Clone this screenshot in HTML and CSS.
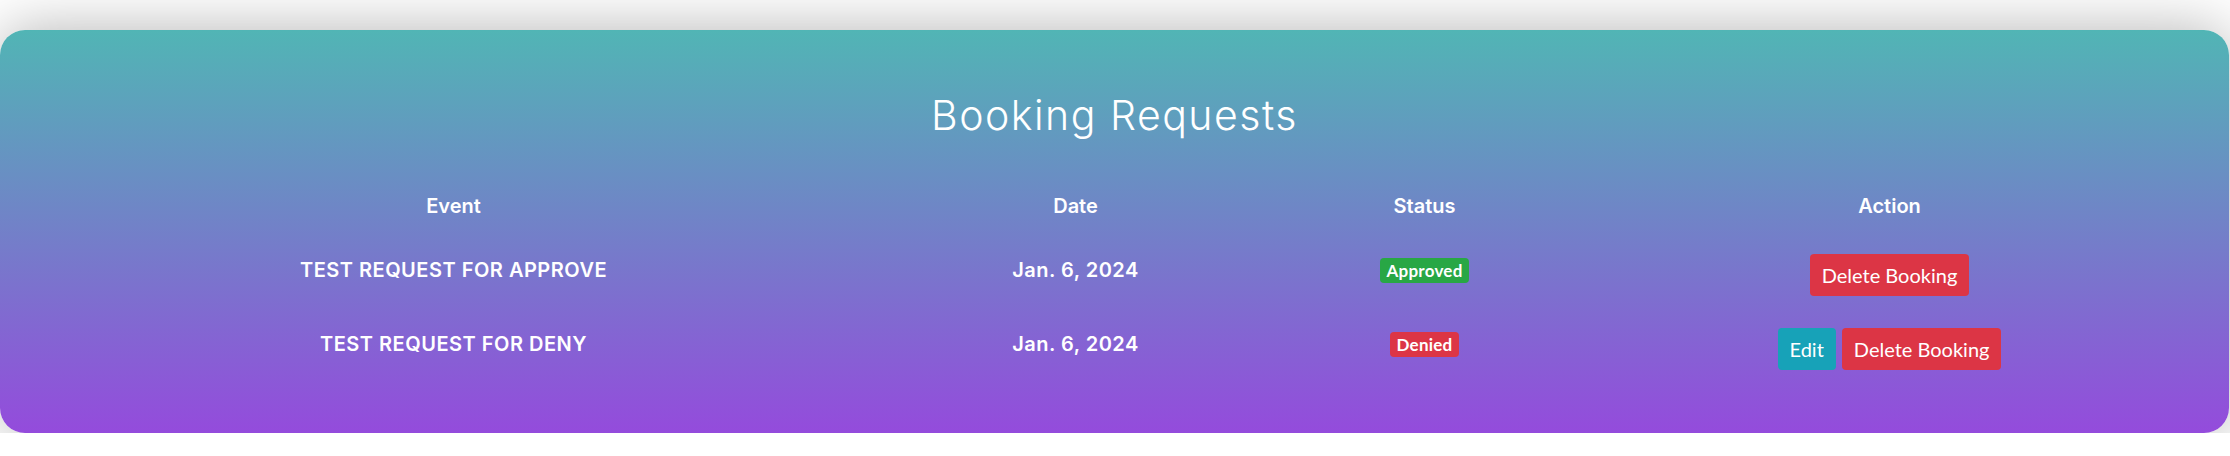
FILE: index.html
```html
<!DOCTYPE html>
<html lang="en">
<head>
<meta charset="utf-8">
<title>Booking Requests</title>
<link rel="stylesheet" href="styles.css">
</head>
<body>
<main class="card">
  <h1 class="title">Booking Requests</h1>
  <div class="table">
    <div class="cell head">Event</div>
    <div class="cell head">Date</div>
    <div class="cell head">Status</div>
    <div class="cell head">Action</div>

    <div class="cell body">TEST REQUEST FOR APPROVE</div>
    <div class="cell body">Jan. 6, 2024</div>
    <div class="cell body"><span class="badge badge-green">Approved</span></div>
    <div class="cell body action"><button class="btn btn-red">Delete Booking</button></div>

    <div class="cell body">TEST REQUEST FOR DENY</div>
    <div class="cell body">Jan. 6, 2024</div>
    <div class="cell body"><span class="badge badge-red">Denied</span></div>
    <div class="cell body action"><button class="btn btn-teal">Edit</button><button class="btn btn-red">Delete Booking</button></div>
  </div>
</main>
</body>
</html>
```
FILE: styles.css
```css
html, body {
  margin: 0;
  padding: 0;
  background: #ffffff;
}
body {
  font-family: Inter, Lato, sans-serif;
  color: #ffffff;
}
.card {
  margin: 30px 1px 0 0;
  padding: 60px 28px 47px;
  border-radius: 25px;
  background: linear-gradient(to bottom, #51b5b5, #944bdc);
  box-shadow: 0 0 60px rgba(0, 0, 0, 0.3);
}
.title {
  margin: 0;
  font-family: Inter, Lato, sans-serif;
  font-size: 41px;
  line-height: 50px;
  font-weight: 300;
  letter-spacing: 1.5px;
  text-align: center;
}
.table {
  margin-top: 35px;
  display: grid;
  grid-template-columns: 851px 393px 305px 625px;
}
.cell {
  padding: 16px 0;
  text-align: center;
  font-size: 20px;
  line-height: 30px;
  font-weight: 600;
}
.head {
  padding-bottom: 17px;
}
.body {
  line-height: 32px;
  letter-spacing: 0.5px;
}
.action {
  display: flex;
  justify-content: center;
  align-items: flex-start;
  gap: 6px;
  letter-spacing: 0;
}
.badge {
  display: inline-block;
  vertical-align: top;
  margin-top: 4px;
  padding: 4px 6.5px;
  border-radius: 4px;
  font-family: Lato, sans-serif;
  font-size: 17px;
  line-height: 17px;
  font-weight: 700;
  letter-spacing: 0.25px;
  color: #ffffff;
}
.badge-green { background: #28a745; }
.badge-red { background: #dc3545; }
.btn {
  border: 0;
  margin: 0;
  padding: 6px 12px;
  border-radius: 4px;
  font-family: Lato, sans-serif;
  font-size: 20px;
  line-height: 30px;
  font-weight: 400;
  letter-spacing: 0;
  color: #ffffff;
  cursor: pointer;
}
.btn-red { background: #dc3545; }
.btn-teal { background: #17a2b8; }
```
